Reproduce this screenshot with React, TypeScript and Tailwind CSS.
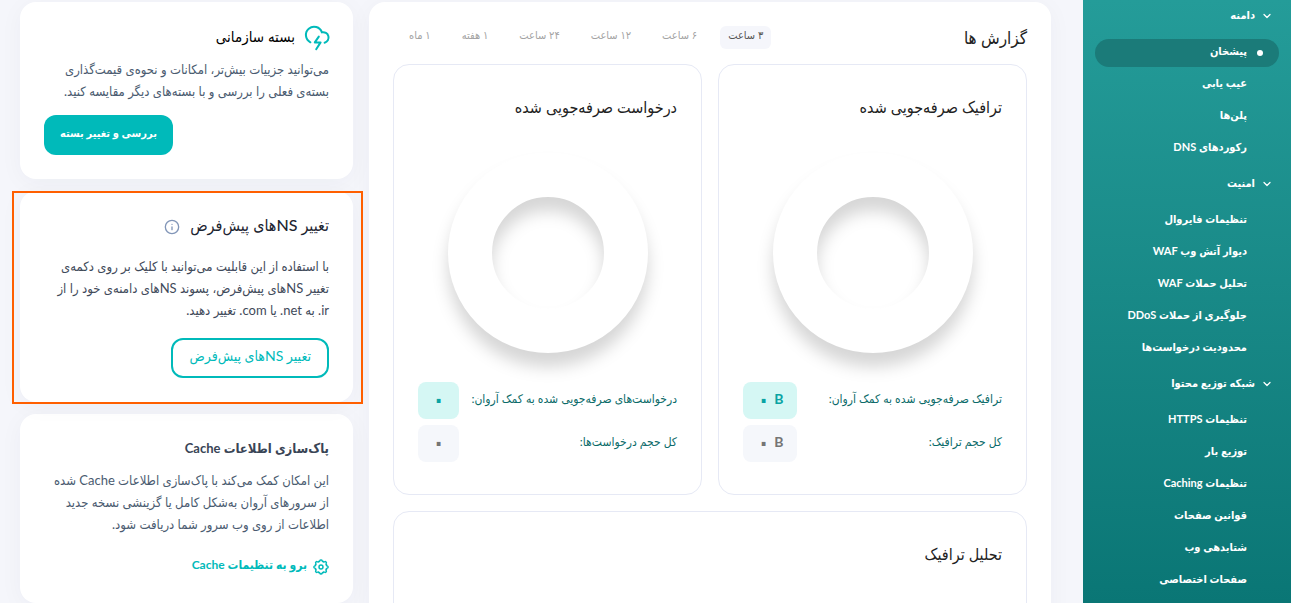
import type { ReactNode } from "react";
import { ChevronDown, Info } from "lucide-react";

const groups = [
  { title: "دامنه", items: ["پیشخان", "عیب یابی", "پلن‌ها", "رکوردهای DNS"] },
  {
    title: "امنیت",
    items: ["تنظیمات فایروال", "دیوار آتش وب WAF", "تحلیل حملات WAF", "جلوگیری از حملات DDoS", "محدودیت درخواست‌ها"],
  },
  {
    title: "شبکه توزیع محتوا",
    items: ["تنظیمات HTTPS", "توزیع بار", "تنظیمات Caching", "قوانین صفحات", "شتابدهی وب", "صفحات اختصاصی"],
  },
];

const ranges = ["۳ ساعت", "۶ ساعت", "۱۲ ساعت", "۲۴ ساعت", "۱ هفته", "۱ ماه"];

function CloudBolt() {
  return (
    <svg viewBox="0 0 24 24" className="size-6 shrink-0 overflow-visible" fill="none" stroke="#00baba" strokeWidth="2" strokeLinecap="round" strokeLinejoin="round" aria-hidden="true">
      <path d="M5.4 16.3A8.2 8.2 0 1 1 16.9 6.4A5.2 5.2 0 1 1 19.6 16.7" />
      <path d="M13.8 10.6L9.8 16.4H15.6L11.2 23.2" />
    </svg>
  );
}

const LOBES = [0, 45, 90, 135, 180, 225, 270, 315];

function Gear() {
  return (
    <svg viewBox="0 0 24 24" className="size-4 shrink-0" fill="none" stroke="#00baba" strokeWidth="2.2" strokeLinecap="round" strokeLinejoin="round" aria-hidden="true">
      <circle cx="12" cy="12" r="3" />
      {LOBES.map((angle) => (
        <path key={angle} transform={`rotate(${angle} 12 12)`} d="M8.6 3.8Q10 4.2 10.3 2.6Q10.6 1.3 12 1.3Q13.4 1.3 13.7 2.6Q14 4.2 15.4 3.8" />
      ))}
    </svg>
  );
}

function Ring() {
  return (
    <svg viewBox="0 0 200 200" className="mx-auto mt-7 size-[200px] overflow-visible drop-shadow-[0_14px_8px_rgba(0,0,0,0.16)]" aria-hidden="true">
      <circle cx="100" cy="100" r="78" fill="none" stroke="#fff" strokeWidth="44" />
    </svg>
  );
}

function Row({ label, amount, unit, active }: { label: string; amount: string; unit?: string; active?: boolean }) {
  return (
    <div className="flex items-center justify-between">
      <dt className="pb-1 text-xs whitespace-nowrap text-[#0b6b69]">{label}</dt>
      <dd
        dir="ltr"
        className={
          active
            ? "flex h-[37px] items-center gap-1 rounded-lg bg-[#d5f7f4] px-3.5 pb-1 font-bold text-[#0aa3a3]"
            : "flex h-[37px] items-center gap-1 rounded-lg bg-[#f5f7fb] px-3.5 pb-1 font-bold text-[#757575]"
        }
      >
        <span className="text-2xl leading-6">{amount}</span>
        {unit && <span className="text-sm">{unit}</span>}
      </dd>
    </div>
  );
}

function Saving({ title, unit, labels }: { title: string; unit?: string; labels: string[] }) {
  return (
    <section className="min-w-0 flex-1 rounded-2xl border border-[#e6e9f5] px-6 pt-6 pb-8">
      <h2 className="text-base leading-9 font-medium text-[#222]">{title}</h2>
      <Ring />
      <dl className="mt-[29px] flex flex-col gap-1.5">
        {labels.map((label, i) => (
          <Row key={label} label={label} amount="۰" unit={unit} active={i === 0} />
        ))}
      </dl>
    </section>
  );
}

function Card({ children }: { children: ReactNode }) {
  return <section className="flex flex-col rounded-2xl bg-white p-6 shadow-[0_4px_24px_rgba(30,40,80,0.04)]">{children}</section>;
}

export default function App() {
  return (
    <div dir="rtl" lang="fa" className="flex h-screen overflow-hidden bg-[#f5f6fb] font-['Lato','DejaVu_Sans_Condensed','DejaVu_Sans',sans-serif]">
      <nav className="w-52 shrink-0 bg-linear-to-b from-[#249c99] to-[#0a7675] px-3 pt-[3px] text-[11px] font-bold text-white">
        {groups.map((group, g) => (
          <div key={group.title} className="mb-2">
            <button type="button" className="mb-2 flex h-7 w-full items-center gap-1.5 px-1.5 pb-1">
              <ChevronDown className="mt-0.5 size-3" strokeWidth={2.5} />
              {group.title}
            </button>
            <ul className="flex flex-col gap-1">
              {group.items.map((item, i) => {
                const current = g === 0 && i === 0;
                return (
                  <li key={item}>
                    <a
                      href="#"
                      aria-current={current ? "page" : undefined}
                      className={
                        current
                          ? "flex h-7 items-center gap-2.5 rounded-[14px] bg-[#1b7b79] pr-4 whitespace-nowrap"
                          : "flex h-7 items-center pr-8 whitespace-nowrap"
                      }
                    >
                      {current && <span className="size-1.5 rounded-full bg-white" />}
                      <span className="pb-1">{item}</span>
                    </a>
                  </li>
                );
              })}
            </ul>
          </div>
        ))}
      </nav>

      <div className="flex min-w-0 flex-1 items-start gap-4 pt-0.5 pr-8 pl-5">
        <main className="min-w-0 flex-1 rounded-2xl bg-white p-6 shadow-[0_4px_24px_rgba(30,40,80,0.04)]">
          <header className="mb-[15px] flex h-[23px] items-center justify-between">
            <h1 className="text-[17px] font-medium text-[#222]">گزارش ها</h1>
            <div className="flex gap-[15px] pl-2">
              {ranges.map((range, i) => (
                <button
                  key={range}
                  type="button"
                  aria-pressed={i === 0}
                  className={
                    i === 0
                      ? "h-[23px] rounded-md bg-[#f5f6fb] px-2 pb-1 text-[11px] whitespace-nowrap text-[#555]"
                      : "h-[23px] rounded-md px-2 pb-1 text-[11px] whitespace-nowrap text-[#a3a3a3]"
                  }
                >
                  {range}
                </button>
              ))}
            </div>
          </header>
          <div className="flex gap-4">
            <Saving
              title="ترافیک صرفه‌جویی شده"
              unit="B"
              labels={["ترافیک صرفه‌جویی شده به کمک آروان:", "کل حجم ترافیک:"]}
            />
            <Saving
              title="درخواست صرفه‌جویی شده"
              labels={["درخواست‌های صرفه‌جویی شده به کمک آروان:", "کل حجم درخواست‌ها:"]}
            />
          </div>
          <section className="mt-4 min-h-64 rounded-2xl border border-[#e6e9f5] p-6">
            <h2 className="text-base leading-9 font-medium text-[#222]">تحلیل ترافیک</h2>
          </section>
        </main>

        <aside className="flex w-[333px] shrink-0 flex-col gap-3 text-[13px] leading-[22px] text-[#4a5b70]">
          <Card>
            <div className="flex h-6 items-center gap-2.5">
              <CloudBolt />
              <h2 className="pb-1 text-[15px] font-medium text-black">بسته سازمانی</h2>
            </div>
            <p className="mt-2">
              می‌توانید جزییات بیش‌تر، امکانات و نحوه‌ی قیمت‌گذاری
              <br />
              بسته‌ی فعلی را بررسی و با بسته‌های دیگر مقایسه کنید.
            </p>
            <button type="button" className="mt-[13px] h-10 self-end rounded-xl bg-[#00baba] px-4 pb-1 text-[11px] font-bold text-white">
              بررسی و تغییر بسته
            </button>
          </Card>

          <div className="relative">
            <Card>
              <div className="flex h-6 items-center gap-2.5">
                <h2 className="pb-1 text-base font-medium text-[#1c2430]">تغییر NSهای پیش‌فرض</h2>
                <Info className="size-4 text-[#8296b8]" strokeWidth={2} />
              </div>
              <p className="mt-4 text-[#3f4a5a]">
                با استفاده از این قابلیت می‌توانید با کلیک بر روی دکمه‌ی
                <br />
                تغییر NSهای پیش‌فرض، پسوند NSهای دامنه‌ی خود را از
                <br />
                <span dir="ltr">ir</span>. به <span dir="ltr">net</span>. یا <span dir="ltr">com</span>. تغییر دهید.
              </p>
              <button type="button" className="mt-[17px] h-10 self-start rounded-xl border-2 border-[#00baba] px-4 pb-1 text-sm text-[#00baba]">
                تغییر NSهای پیش‌فرض
              </button>
            </Card>
            <div className="pointer-events-none absolute top-0 -right-2.5 -bottom-0.5 -left-2 border-2 border-[#ff5f00]" />
          </div>

          <Card>
            <h2 className="text-[13px] leading-5 font-bold text-[#3a4556]">پاک‌سازی اطلاعات Cache</h2>
            <p className="mt-[11px]">
              این امکان کمک می‌کند با پاک‌سازی اطلاعات Cache شده
              <br />
              از سرورهای آروان به‌شکل کامل یا گزینشی نسخه جدید
              <br />
              اطلاعات از روی وب سرور شما دریافت شود.
            </p>
            <a href="#" className="mt-5 flex items-center gap-1.5 text-xs leading-5 font-bold text-[#00baba]">
              <Gear />
              <span className="pb-1">برو به تنظیمات Cache</span>
            </a>
          </Card>
        </aside>
      </div>
    </div>
  );
}
